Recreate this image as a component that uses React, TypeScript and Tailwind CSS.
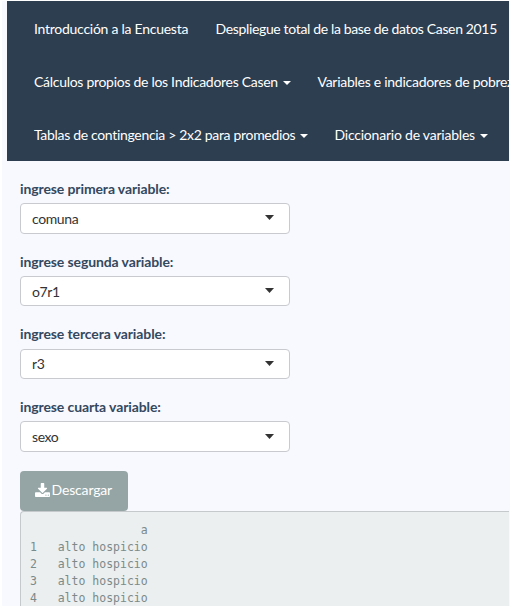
type NavItem = { label: string; caret?: boolean; className: string };

const navRows: NavItem[][] = [
  [
    { label: "Introducción a la Encuesta", className: "w-[181.5px] tracking-[-0.26px]" },
    { label: "Despliegue total de la base de datos Casen 2015", className: "w-[290px] tracking-[-0.35px]" },
  ],
  [
    { label: "Cálculos propios de los Indicadores Casen", caret: true, className: "w-[283.5px] tracking-[-0.29px]" },
    { label: "Variables e indicadores de pobreza", className: "w-[260px] tracking-[-0.27px]" },
  ],
  [
    { label: "Tablas de contingencia > 2x2 para promedios", caret: true, className: "w-[300.5px] tracking-[-0.32px]" },
    { label: "Diccionario de variables", caret: true, className: "w-[170px] tracking-[-0.22px]" },
  ],
];

const fields = [
  { label: "ingrese primera variable:", value: "comuna" },
  { label: "ingrese segunda variable:", value: "o7r1" },
  { label: "ingrese tercera variable:", value: "r3" },
  { label: "ingrese cuarta variable:", value: "sexo" },
];

const output = `                a
1   alto hospicio
2   alto hospicio
3   alto hospicio
4   alto hospicio`;

function Nav() {
  return (
    <nav className="mr-px h-[160px] overflow-hidden bg-[#2c3e50] pl-[27px] text-[14px] text-white">
      {navRows.map((row, i) => (
        <div key={i} className="flex h-[53px] items-center pt-[2px]">
          {row.map((item) => (
            <a key={item.label} className={`flex shrink-0 items-center whitespace-nowrap ${item.className}`}>
              {item.label}
              {item.caret && (
                <span className="mt-[2px] ml-[5px] border-x-4 border-t-4 border-x-transparent border-t-white" />
              )}
            </a>
          ))}
        </div>
      ))}
    </nav>
  );
}

function DownloadIcon() {
  return (
    <svg viewBox="64 0 1664 1536" className="mr-[1.5px] h-[14px] w-[15px] fill-current">
      <path d="M1344 1344q0-26-19-45t-45-19-45 19-19 45 19 45 45 19 45-19 19-45zm256 0q0-26-19-45t-45-19-45 19-19 45 19 45 45 19 45-19 19-45zm128-224v320q0 40-28 68t-68 28h-1472q-40 0-68-28t-28-68v-320q0-40 28-68t68-28h465l135 136q58 56 136 56t136-56l136-136h464q40 0 68 28t28 68zm-325-569q17 41-14 70l-448 448q-18 19-45 19t-45-19l-448-448q-31-29-14-70 17-39 59-39h256v-448q0-26 19-45t45-19h256q26 0 45 19t19 45v448h256q42 0 59 39z" />
    </svg>
  );
}

function Field({ label, value }: { label: string; value: string }) {
  return (
    <div className="h-[72.7px]">
      <label className="block h-[24.2px] text-[14px] leading-[20px] font-bold tracking-[-0.11px] text-[#34495e]">
        {label}
      </label>
      <div className="flex h-[30.5px] w-[270px] items-center justify-between rounded-[4px] border border-[#c8cad0] bg-white pr-[15px] pl-[11px] text-[14px] text-[#333]">
        <span className="tracking-[-0.4px]">{value}</span>
        <svg viewBox="0 0 9 5" className="mb-px h-[5px] w-[9px] fill-[#333]">
          <path d="M0 0h9L4.5 5z" />
        </svg>
      </div>
    </div>
  );
}

export default function App() {
  return (
    <div className="h-[606px] w-[510px] overflow-hidden bg-white pt-px font-[Lato,'Liberation_Sans',sans-serif]">
      <div className="ml-[2px] h-[605px] bg-[#f8f8ff] pl-[5px]">
        <Nav />
        <main className="pt-[18px] pl-[13px]">
          {fields.map((field) => (
            <Field key={field.label} {...field} />
          ))}
          <button className="mt-[1.2px] flex h-[40px] w-[108px] items-center rounded-[4px] bg-[#95a5a6] pb-[2px] pl-[15px] text-[14px] tracking-[-0.15px] text-white">
            <DownloadIcon />
            Descargar
          </button>
          <pre className="mr-px h-[120px] overflow-hidden rounded-tl-[4px] border-t border-l border-[#c5c9cc] bg-[#ebefef] pt-[10px] pl-[9px] font-['DejaVu_Sans_Mono',monospace] text-[11.5px] leading-[17px] text-[#7b8a8b]">
            {output}
          </pre>
        </main>
      </div>
    </div>
  );
}
